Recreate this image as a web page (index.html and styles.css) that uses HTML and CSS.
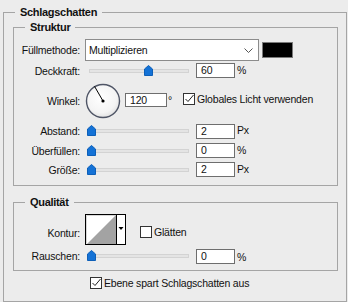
FILE: index.html
```html
<!DOCTYPE html>
<html lang="de">
<head>
<meta charset="utf-8">
<title>Schlagschatten</title>
<link rel="stylesheet" href="styles.css">
</head>
<body>
<fieldset class="group group-outer">
  <legend class="group-title">Schlagschatten</legend>
  <div class="outer-body">
    <fieldset class="group">
      <legend class="group-title">Struktur</legend>
      <div class="group-body body-struktur">
        <div class="row row-blend">
          <span class="lbl">Füllmethode:</span>
          <div class="select">
            <span class="select-text">Multiplizieren</span>
            <svg class="chev" width="9" height="5" viewBox="0 0 9 5"><path d="M0.5 0.5 L4.5 4.5 L8.5 0.5" fill="none" stroke="#555" stroke-width="1"/></svg>
          </div>
          <div class="swatch"></div>
        </div>
        <div class="row row-slider row-h19">
          <span class="lbl">Deckkraft:</span>
          <div class="slider">
            <div class="track"></div>
            <svg class="thumb" style="left:59px" width="9" height="11" viewBox="0 0 9 11"><path d="M4.5 0.5 L8.5 4 L8.5 10.5 L0.5 10.5 L0.5 4 Z" fill="#1472d6" stroke="#0d5fb8" stroke-width="1"/></svg>
          </div>
          <div class="num">60</div>
          <span class="unit">%</span>
        </div>
        <div class="row row-angle">
          <span class="lbl">Winkel:</span>
          <svg class="dial" width="36" height="36" viewBox="0 0 36 36">
            <defs>
              <radialGradient id="dialfill" cx="0.45" cy="0.4" r="0.65">
                <stop offset="0" stop-color="#ffffff"/>
                <stop offset="0.7" stop-color="#f4f4f4"/>
                <stop offset="1" stop-color="#dcdcdc"/>
              </radialGradient>
            </defs>
            <circle cx="18" cy="18" r="16.5" fill="url(#dialfill)" stroke="#4f5566" stroke-width="1.4"/>
            <line x1="18" y1="18" x2="9.5" y2="3.3" stroke="#000" stroke-width="1"/>
            <circle cx="18" cy="18" r="1.6" fill="#000"/>
          </svg>
          <div class="num num-angle">120</div>
          <span class="unit deg">°</span>
          <span class="check check-global">
            <svg width="12" height="12" viewBox="0 0 12 12"><path d="M2.5 6 L5 8.5 L10.5 2" fill="none" stroke="#222" stroke-width="1"/></svg>
          </span>
          <span class="check-label">Globales Licht verwenden</span>
        </div>
        <div class="row row-slider row-h20 row-gap2">
          <span class="lbl">Abstand:</span>
          <div class="slider">
            <div class="track"></div>
            <svg class="thumb" style="left:2px" width="9" height="11" viewBox="0 0 9 11"><path d="M4.5 0.5 L8.5 4 L8.5 10.5 L0.5 10.5 L0.5 4 Z" fill="#1472d6" stroke="#0d5fb8" stroke-width="1"/></svg>
          </div>
          <div class="num">2</div>
          <span class="unit">Px</span>
        </div>
        <div class="row row-slider row-h19">
          <span class="lbl">Überfüllen:</span>
          <div class="slider">
            <div class="track"></div>
            <svg class="thumb" style="left:2px" width="9" height="11" viewBox="0 0 9 11"><path d="M4.5 0.5 L8.5 4 L8.5 10.5 L0.5 10.5 L0.5 4 Z" fill="#1472d6" stroke="#0d5fb8" stroke-width="1"/></svg>
          </div>
          <div class="num">0</div>
          <span class="unit">%</span>
        </div>
        <div class="row row-slider row-h19">
          <span class="lbl">Größe:</span>
          <div class="slider">
            <div class="track"></div>
            <svg class="thumb" style="left:2px" width="9" height="11" viewBox="0 0 9 11"><path d="M4.5 0.5 L8.5 4 L8.5 10.5 L0.5 10.5 L0.5 4 Z" fill="#1472d6" stroke="#0d5fb8" stroke-width="1"/></svg>
          </div>
          <div class="num">2</div>
          <span class="unit">Px</span>
        </div>
      </div>
    </fieldset>

    <fieldset class="group group-quality">
      <legend class="group-title">Qualität</legend>
      <div class="group-body body-quality">
        <div class="row row-contour">
          <span class="lbl lbl-contour">Kontur:</span>
          <div class="contour">
            <svg width="41" height="31" viewBox="0 0 41 31">
              <rect x="0.5" y="0.5" width="40" height="30" fill="#fff" stroke="#000"/>
              <path d="M1.5 1.5 L30.5 1.5" stroke="#d8d8d8"/>
              <path d="M1.5 1.5 L1.5 29.5" stroke="#d8d8d8"/>
              <polygon points="2,30 31,1 31,30" fill="#a3a3a3"/>
              <line x1="31.5" y1="0" x2="31.5" y2="31" stroke="#000"/>
              <polygon points="33.5,13 38.5,13 36,16" fill="#000"/>
            </svg>
          </div>
          <span class="check check-smooth"></span>
          <span class="check-label">Glätten</span>
        </div>
        <div class="row row-slider row-noise">
          <span class="lbl">Rauschen:</span>
          <div class="slider">
            <div class="track"></div>
            <svg class="thumb" style="left:2px" width="9" height="11" viewBox="0 0 9 11"><path d="M4.5 0.5 L8.5 4 L8.5 10.5 L0.5 10.5 L0.5 4 Z" fill="#1472d6" stroke="#0d5fb8" stroke-width="1"/></svg>
          </div>
          <div class="num">0</div>
          <span class="unit">%</span>
        </div>
      </div>
    </fieldset>

    <div class="row row-knockout">
      <span class="check check-knockout">
        <svg width="12" height="12" viewBox="0 0 12 12"><path d="M2.5 6 L5 8.5 L10.5 2" fill="none" stroke="#222" stroke-width="1"/></svg>
      </span>
      <span class="check-label">Ebene spart Schlagschatten aus</span>
    </div>
  </div>
</fieldset>
</body>
</html>
```
FILE: styles.css
```css
* {
  box-sizing: border-box;
}

html,
body {
  margin: 0;
  padding: 0;
}

body {
  width: 348px;
  height: 302px;
  overflow: hidden;
  background: #ececec;
  font-family: "Liberation Sans", Arial, sans-serif;
  font-size: 10.5px;
  letter-spacing: -0.2px;
  color: #111;
}

.group {
  margin: 0;
  padding: 0;
  min-width: 0;
  border: 1px solid #a5a5a5;
}

.group-outer {
  margin: 5px 0 0 3px;
  width: 344px;
  height: 297px;
}

.group-title {
  margin-left: 11px;
  padding: 0 5px;
  font-weight: bold;
  font-size: 11px;
  letter-spacing: -0.3px;
  line-height: 14px;
}

.outer-body {
  padding: 1px 8px 0 9px;
}

.group-body {
  display: flex;
  flex-direction: column;
}

.body-struktur {
  padding: 5px 0 6px 0;
}

.group-quality {
  margin-top: 9px;
}

.body-quality {
  padding: 5px 0 6px 0;
}

.row {
  display: flex;
  align-items: center;
}

.row-blend {
  height: 22px;
}

.row-h19 {
  height: 19px;
}

.row-h20 {
  height: 20px;
}

.row-gap2 {
  margin-top: 2px;
}

.lbl {
  flex: none;
  width: 66px;
  margin-right: 5px;
  text-align: right;
  white-space: nowrap;
}

.select {
  flex: none;
  width: 174px;
  height: 22px;
  border: 1px solid #8c8c8c;
  background: #fff;
  display: flex;
  align-items: center;
  justify-content: space-between;
  padding: 0 4px 0 3px;
}

.chev {
  margin-right: 1px;
}

.swatch {
  flex: none;
  width: 31px;
  height: 16px;
  margin-left: 3px;
  border: 1px solid #7a7a7a;
  background: #000;
}

.slider {
  flex: none;
  position: relative;
  width: 111px;
  height: 100%;
  display: flex;
  align-items: center;
}

.track {
  width: 100px;
  height: 4px;
  margin-left: 4px;
  background: #e4e4e4;
  border: 1px solid #d3d3d3;
}

.thumb {
  position: absolute;
  top: 50%;
  margin-top: -6px;
}

.num {
  flex: none;
  width: 39px;
  height: 15px;
  border: 1px solid #6e6e6e;
  background: #fff;
  padding-left: 4px;
  line-height: 13px;
}

.unit {
  align-self: flex-start;
  margin-left: 2px;
  margin-top: 3px;
  line-height: 12px;
}

.row-angle {
  height: 36px;
  margin-top: 3px;
  align-items: flex-start;
}

.row-angle .lbl {
  align-self: center;
}

.dial {
  flex: none;
  margin-right: 4px;
}

.num-angle {
  width: 42px;
  height: 14px;
  line-height: 12px;
  margin-top: 10px;
}

.deg {
  margin-left: 1px;
  margin-top: 11px;
}

.check {
  flex: none;
  width: 12px;
  height: 12px;
  border: 1px solid #333;
  background: #fff;
  display: flex;
  align-items: center;
  justify-content: center;
  overflow: visible;
}

.check svg {
  flex: none;
}

.check-global {
  margin-left: 11px;
  margin-top: 10px;
}

.check-label {
  margin-left: 2px;
  white-space: nowrap;
}

.row-angle .check-label {
  margin-top: 10px;
  line-height: 13px;
}

.row-contour {
  height: 31px;
  align-items: flex-start;
}

.lbl-contour {
  margin-top: 13px;
  line-height: 12px;
}

.contour {
  flex: none;
  width: 41px;
  height: 31px;
}

.contour svg {
  display: block;
}

.check-smooth {
  margin-left: 14px;
  margin-top: 12px;
}

.row-contour .check-label {
  margin-top: 12px;
  line-height: 12px;
}

.row-noise {
  height: 16px;
  margin-top: 3px;
}

.row-knockout {
  margin-top: 6px;
  height: 12px;
  padding-left: 77px;
}
```
